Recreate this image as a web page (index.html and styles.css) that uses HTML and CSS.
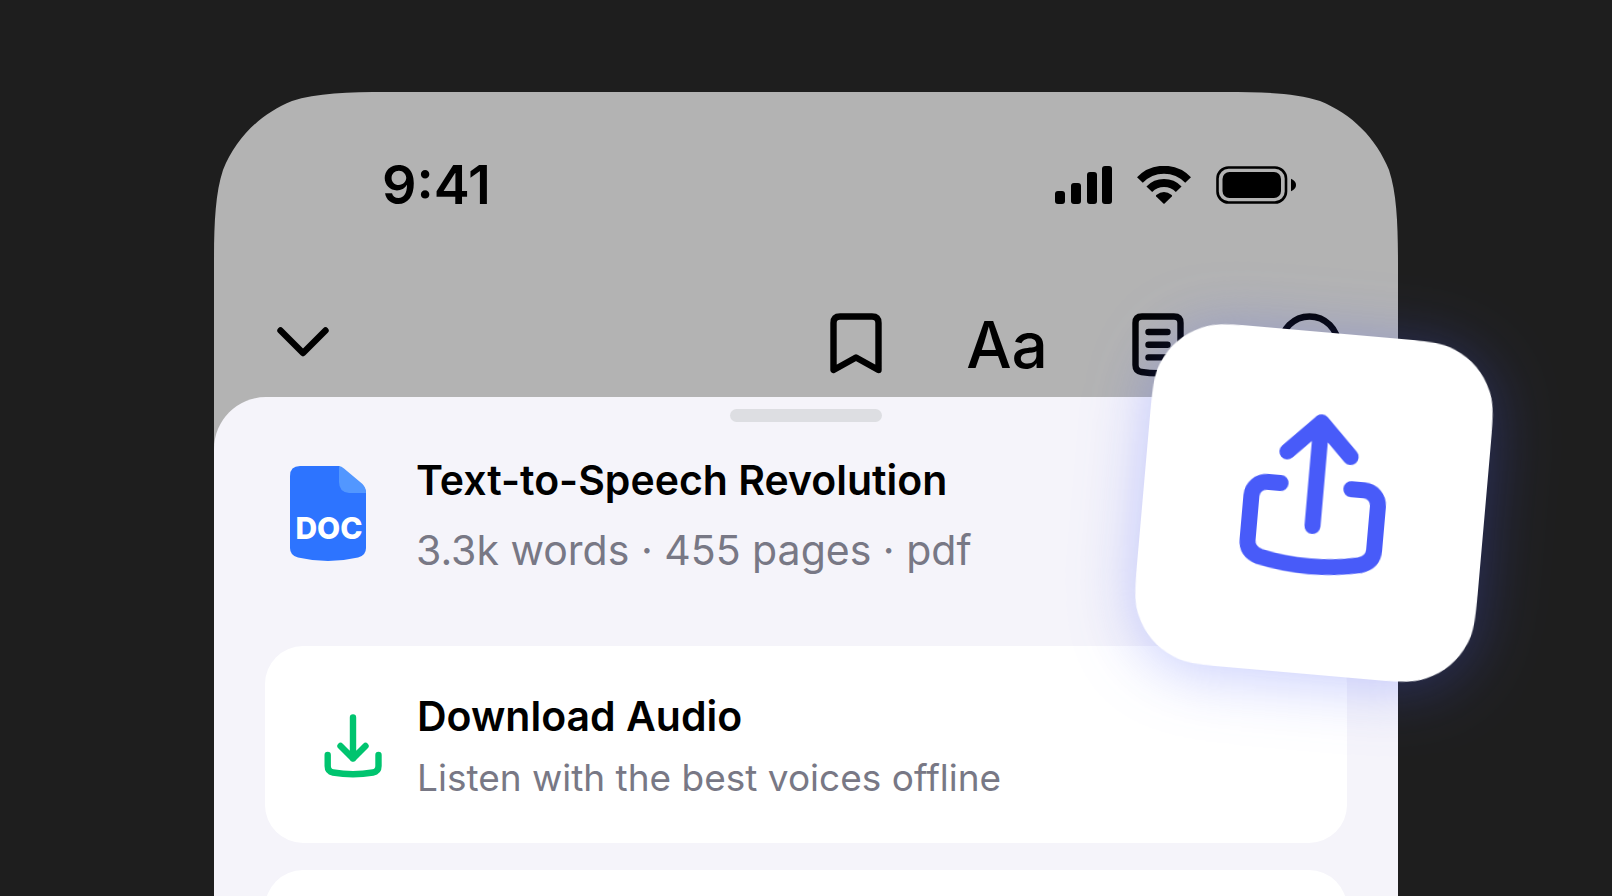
FILE: index.html
```html
<!DOCTYPE html>
<html lang="en">

<head>
  <meta charset="UTF-8">
  <meta name="viewport" content="width=device-width, initial-scale=1.0">
  <title>Text-to-Speech Revolution</title>
  <link rel="stylesheet" href="styles.css">
</head>

<body>
  <main class="phone">
    <svg class="corner corner-left" viewBox="0 0 172 172" aria-hidden="true"><path d="M0 172C0 135 1 102 9 78C22 46 46 22 78 9C102 1 135 0 172 0H0Z"/></svg>
    <svg class="corner corner-right" viewBox="0 0 172 172" aria-hidden="true"><path d="M0 172C0 135 1 102 9 78C22 46 46 22 78 9C102 1 135 0 172 0H0Z"/></svg>

    <div class="status-bar">
      <time class="clock">9:41</time>
      <div class="status-icons">
        <svg width="57" height="38" viewBox="0 0 57 38" aria-hidden="true">
          <rect x="0" y="25" width="10" height="13" rx="3"/>
          <rect x="16" y="17" width="10" height="21" rx="3"/>
          <rect x="32" y="6" width="10" height="32" rx="3"/>
          <rect x="47" y="0" width="10" height="38" rx="3"/>
        </svg>
        <svg width="54" height="38" viewBox="0 0 54 38" aria-hidden="true">
          <path d="M2.9 14A33.5 33.5 0 0 1 51.1 14M12.3 23.2A20.5 20.5 0 0 1 41.7 23.2" fill="none" stroke="#000" stroke-width="8"/>
          <path d="M19.2 30.4Q18.6 29.7 19.3 29Q27 23 34.7 29Q35.4 29.7 34.8 30.4L27.6 37.6Q27 38.1 26.4 37.6Z"/>
        </svg>
        <svg width="80" height="38" viewBox="0 0 80 38" aria-hidden="true">
          <rect x="1.5" y="1.5" width="68.5" height="35" rx="11" fill="none" stroke="#000" stroke-width="2.6"/>
          <rect x="6.5" y="6" width="58.5" height="26" rx="7"/>
          <path d="M75 12.8Q80 15 80 19T75 25.2Z"/>
        </svg>
      </div>
    </div>

    <nav class="toolbar">
      <button class="icon-btn" aria-label="Close">
        <svg viewBox="0 0 76 76"><path d="M15.5 23.5L38 46L60.5 23.5"/></svg>
      </button>
      <div class="tools">
        <button class="icon-btn" aria-label="Bookmark">
          <svg viewBox="0 0 76 76"><path d="M15.5 63V16Q15.5 9.5 22 9.5H54Q60.5 9.5 60.5 16V63L38 50.5Z"/></svg>
        </button>
        <button class="icon-btn text-btn" aria-label="Text size">Aa</button>
        <button class="icon-btn" aria-label="Contents">
          <svg viewBox="0 0 76 76"><path d="M15.5 16Q15.5 9.5 22 9.5H54Q60.5 9.5 60.5 16V58Q60.5 64 54.5 65Q38 67.5 21.5 65Q15.5 64 15.5 58ZM28.5 25H47.5M28.5 37.7H47.5M28.5 50.4H47.5"/></svg>
        </button>
        <button class="icon-btn" aria-label="More">
          <svg viewBox="0 0 76 76"><circle cx="38.5" cy="38" r="28.5"/><path d="M25 38h.1M38 38h.1M51 38h.1"/></svg>
        </button>
      </div>
    </nav>

    <section class="sheet">
      <div class="grabber"></div>

      <header class="file">
        <svg class="file-icon" viewBox="0 0 76 96" aria-hidden="true">
          <path fill="#2d74ff" d="M10 0H49L72.5 19.5Q76 22.5 76 27V82Q76 89.5 68 91.5Q38 98.5 8 91.5Q0 89.5 0 82V10Q0 0 10 0Z"/>
          <path fill="#5297ff" d="M49 0Q51.5 .2 54 2.5L72.5 18Q76 21.5 76 27H59Q49 26 49 16Z"/>
          <text x="39" y="73" text-anchor="middle">DOC</text>
        </svg>
        <div class="file-text">
          <h1 class="title">Text-to-Speech Revolution</h1>
          <p class="meta">3.3k words · 455 pages · pdf</p>
        </div>
      </header>

      <button class="card">
        <svg class="card-icon" viewBox="0 0 76 76" aria-hidden="true"><path d="M38 9.5V50.5M25.5 38L38 50.5L50.5 38M12.7 47V58Q12.7 63.5 18 64.5Q38 68 58 64.5Q63.5 63.5 63.5 58V47"/></svg>
        <span class="card-text">
          <span class="title">Download Audio</span>
          <span class="hint">Listen with the best voices offline</span>
        </span>
      </button>
      <div class="card"></div>
    </section>

    <button class="share" aria-label="Share">
      <svg viewBox="0 0 342 342">
        <path class="tile" d="M0 110C0 70 0 58 6 44C14 26 26 14 44 6C58 0 70 0 110 0H232C272 0 284 0 298 6C316 14 328 26 336 44C342 58 342 70 342 110V232C342 272 342 284 336 298C328 316 316 328 298 336C284 342 272 342 232 342H110C70 342 58 342 44 336C26 328 14 316 6 298C0 284 0 272 0 232Z"/>
        <path class="arrow" d="M171.5 194V90M140 122L171.5 90L203.5 122M136 154H123A15 15 0 0 0 108 169V213Q108 225 121 229Q171.5 240 222 229Q235 225 235 213V169A15 15 0 0 0 220 154H207"/>
      </svg>
    </button>
  </main>
</body>

</html>
```
FILE: styles.css
```css
* {
  box-sizing: border-box;
}

body {
  margin: 0;
  height: 100vh;
  overflow: hidden;
  padding: 92px 214px 0;
  display: flex;
  background-color: #1e1e1e;
  font-family: Inter, "Liberation Sans", sans-serif;
  color: #000;
}

button {
  border: none;
  padding: 0;
  background: none;
  font: inherit;
  color: inherit;
  text-align: left;
  cursor: pointer;
}

svg {
  display: block;
}

.phone {
  position: relative;
  flex: 1;
  display: flex;
  flex-direction: column;
  background-color: #b3b3b3;
}

/* smooth outer corners */
.corner {
  position: absolute;
  top: 0;
  width: 172px;
  height: 172px;
  fill: #1e1e1e;
}

.corner-left {
  left: 0;
}

.corner-right {
  right: 0;
  transform: scaleX(-1);
}

.status-bar {
  display: flex;
  justify-content: space-between;
  align-items: center;
  padding: 61px 102px 90px 168px;
}

.clock {
  font-size: 54px;
  line-height: 64px;
  font-weight: 600;
}

.status-icons {
  display: flex;
  gap: 25px;
}

.toolbar {
  display: flex;
  justify-content: space-between;
  padding: 0 51px 14px;
}

.tools {
  display: flex;
  gap: 75px;
}

.icon-btn {
  width: 76px;
  height: 76px;
}

.icon-btn svg,
.card-icon {
  width: 76px;
  height: 76px;
  fill: none;
  stroke: #000;
  stroke-width: 6.4;
  stroke-linecap: round;
  stroke-linejoin: round;
}

.text-btn {
  display: flex;
  justify-content: center;
  font-size: 64px;
  line-height: 76px;
  font-weight: 500;
}

.sheet {
  flex: 1;
  padding: 12px 51px 0;
  border-radius: 52px 52px 0 0;
  background-color: #f5f4fa;
}

.grabber {
  width: 152px;
  height: 13px;
  margin: 0 auto;
  border-radius: 8px;
  background-color: #dddee2;
}

.file {
  display: flex;
  align-items: flex-start;
  gap: 50px;
  padding: 26px 25px 66px;
}

.file-icon {
  width: 76px;
  height: 96px;
  margin-top: 18px;
}

.file-icon text {
  font-size: 30px;
  font-weight: 800;
  fill: #fff;
}

.title {
  display: block;
  margin: 0;
  font-size: 41px;
  line-height: 64px;
  font-weight: 600;
}

.meta {
  margin: 8px 0 0;
  font-size: 41px;
  line-height: 60px;
  color: #787885;
}

.card {
  display: flex;
  align-items: center;
  gap: 26px;
  width: 100%;
  min-height: 197px;
  margin-bottom: 27px;
  padding: 37px 50px 35px;
  border-radius: 38px;
  background-color: #fff;
}

.card-icon {
  stroke: #00c46f;
}

.card-text {
  flex: 1;
}

.hint {
  display: block;
  font-size: 37px;
  line-height: 60px;
  color: #787885;
}

/* floating share tile */
.share {
  position: absolute;
  top: 240px;
  right: -87px;
  width: 342px;
  height: 342px;
  transform: rotate(5deg);
  filter: drop-shadow(0 6px 32px rgba(72, 91, 249, 0.32));
}

.share svg {
  width: 100%;
  height: 100%;
}

.tile {
  fill: #fff;
}

.arrow {
  fill: none;
  stroke: #485bf9;
  stroke-width: 16;
  stroke-linecap: round;
  stroke-linejoin: round;
}
```
